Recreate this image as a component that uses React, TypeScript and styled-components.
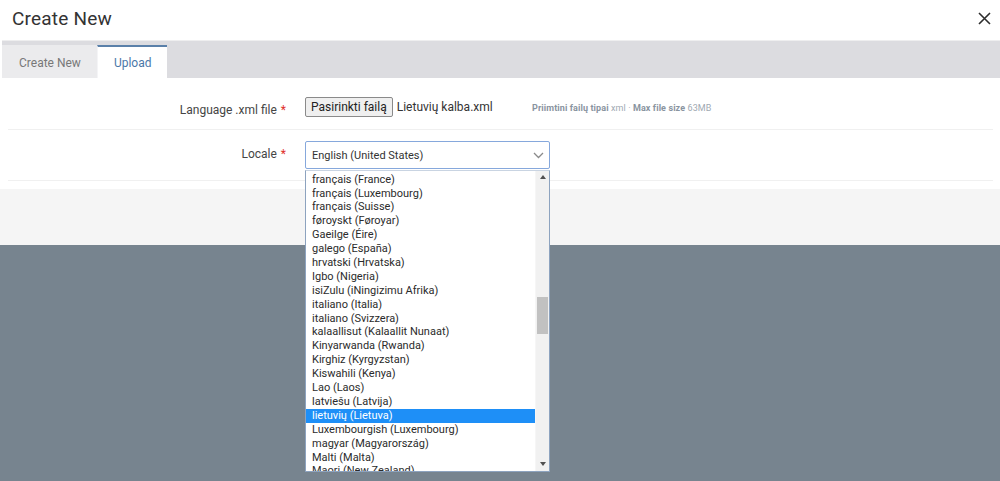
import React from "react";
import styled, { createGlobalStyle } from "styled-components";

const GlobalStyle = createGlobalStyle`
  html, body { margin: 0; padding: 0; }
  body {
    font-family: Roboto, "Liberation Sans", Arial, sans-serif;
    background: #77848f;
  }
  * { box-sizing: border-box; }
`;

const Page = styled.div`
  width: 1000px;
  height: 481px;
  background: #77848f;
  display: flex;
  flex-direction: column;
  overflow: hidden;
`;

const Modal = styled.div`
  background: #ffffff;
  display: flex;
  flex-direction: column;
`;

const Header = styled.div`
  height: 40px;
  display: flex;
  align-items: center;
  justify-content: space-between;
  padding: 0 9px 4px 12px;
`;

const Title = styled.h1`
  margin: 0;
  font-size: 19px;
  font-weight: 400;
  color: #333;
  letter-spacing: 0.2px;
`;

const CloseButton = styled.button`
  border: 0;
  background: transparent;
  padding: 0;
  width: 14px;
  height: 14px;
  display: flex;
  align-items: center;
  justify-content: center;
  cursor: pointer;
`;

const TabBar = styled.div`
  margin-left: 2px;
  height: 38px;
  background: #dcdce0;
  border-top: 1px solid #eeeeef;
  padding-top: 4px;
  display: flex;
  align-items: stretch;
`;

const Tab = styled.div<{ $active?: boolean }>`
  padding: 0 16px;
  display: flex;
  align-items: center;
  font-size: 12px;
  color: ${(p) => (p.$active ? "#4b78a8" : "#787878")};
  background: ${(p) => (p.$active ? "#ffffff" : "#ebebed")};
  border-top: 2px solid ${(p) => (p.$active ? "#5a80a9" : "#ebebed")};
  border-left: 1px solid ${(p) => (p.$active ? "#f4f4f6" : "transparent")};
`;

const Body = styled.div`
  padding: 0 7px 8px 8px;
`;

const FormRow = styled.div<{ $top: number; $bottom: number }>`
  display: grid;
  grid-template-columns: 289px 1fr;
  column-gap: 8px;
  align-items: center;
  padding-top: ${(p) => p.$top}px;
  padding-bottom: ${(p) => p.$bottom}px;
  border-bottom: 1px solid #f0f0f0;
`;

const Label = styled.label<{ $shift?: number }>`
  justify-self: end;
  padding-right: 11px;
  font-size: 12px;
  color: #454545;
  position: relative;
  top: ${(p) => p.$shift ?? 0}px;
`;

const Required = styled.span`
  color: #e0302a;
  margin-left: 4px;
`;

const Controls = styled.div`
  display: flex;
  align-items: center;
`;

const FileField = styled.div`
  width: 227px;
  display: flex;
  align-items: center;
  gap: 4px;
`;

const FileButton = styled.button`
  height: 20px;
  padding: 0 5px;
  font-family: Roboto, "Liberation Sans", Arial, sans-serif;
  font-size: 12px;
  color: #222;
  background: #efefef;
  border: 1px solid #8a8a8a;
  border-radius: 2px;
`;

const FileName = styled.span`
  font-size: 12px;
  color: #333;
`;

const Hint = styled.span`
  font-size: 9px;
  color: #a0a9b2;
  margin-top: 1px;
  letter-spacing: 0.1px;
`;

const HintStrong = styled.b`
  font-weight: 700;
  color: #8994a0;
`;

const SelectWrap = styled.div`
  position: relative;
  width: 245px;
`;

const SelectBox = styled.div`
  height: 28px;
  border: 1px solid #86a8dc;
  border-radius: 2px;
  display: flex;
  align-items: center;
  justify-content: space-between;
  padding: 0 5px 0 6px;
  font-size: 11px;
  color: #333;
  background: #fff;
`;

const Dropdown = styled.div`
  position: absolute;
  top: 100%;
  left: 0;
  width: 245px;
  height: 302px;
  margin-top: 1px;
  background: #fff;
  border: 1px solid #8da3bf;
  border-top-color: #c9d4e2;
  display: flex;
  z-index: 10;
`;

const Options = styled.div`
  flex: 1;
  overflow: hidden;
`;

const OptionList = styled.ul`
  list-style: none;
  margin: 1.7px 0 0 0;
  padding: 0;
`;

const Option = styled.li<{ $selected?: boolean }>`
  height: 13.9px;
  line-height: 13.9px;
  padding-left: 6px;
  font-size: 11px;
  white-space: nowrap;
  color: ${(p) => (p.$selected ? "#ffffff" : "#2b2b2b")};
  background: ${(p) => (p.$selected ? "#1e8ff7" : "transparent")};
`;

const ScrollTrack = styled.div`
  width: 14px;
  background: #f1f1f1;
  border-left: 1px solid #f6f6f6;
  display: flex;
  flex-direction: column;
  align-items: center;
  padding: 4px 0 5px;
`;

const ScrollArrow = styled.div<{ $down?: boolean }>`
  width: 0;
  height: 0;
  border-left: 3.5px solid transparent;
  border-right: 3.5px solid transparent;
  ${(p) =>
    p.$down
      ? "border-top: 4px solid #505050;"
      : "border-bottom: 4px solid #505050;"}
`;

const ScrollSpace = styled.div<{ $grow: number }>`
  flex: ${(p) => p.$grow};
`;

const ScrollThumb = styled.div`
  width: 11px;
  height: 37px;
  background: #c1c1c1;
`;

const Footer = styled.div`
  height: 56px;
  background: #f5f5f5;
`;

const options = [
  "français (France)",
  "français (Luxembourg)",
  "français (Suisse)",
  "føroyskt (Føroyar)",
  "Gaeilge (Éire)",
  "galego (España)",
  "hrvatski (Hrvatska)",
  "Igbo (Nigeria)",
  "isiZulu (iNingizimu Afrika)",
  "italiano (Italia)",
  "italiano (Svizzera)",
  "kalaallisut (Kalaallit Nunaat)",
  "Kinyarwanda (Rwanda)",
  "Kirghiz (Kyrgyzstan)",
  "Kiswahili (Kenya)",
  "Lao (Laos)",
  "latviešu (Latvija)",
  "lietuvių (Lietuva)",
  "Luxembourgish (Luxembourg)",
  "magyar (Magyarország)",
  "Malti (Malta)",
  "Maori (New Zealand)",
];

const CloseIcon = () => (
  <svg width="13" height="13" viewBox="0 0 13 13">
    <path d="M1 1 L12 12 M12 1 L1 12" stroke="#2d2d2d" strokeWidth="1.6" fill="none" />
  </svg>
);

const Chevron = () => (
  <svg width="11" height="7" viewBox="0 0 11 7">
    <path d="M1 1 L5.5 5.5 L10 1" stroke="#8a8a8a" strokeWidth="1.3" fill="none" />
  </svg>
);

export default function App() {
  return (
    <>
      <GlobalStyle />
      <Page>
        <Modal>
          <Header>
            <Title>Create New</Title>
            <CloseButton aria-label="Close">
              <CloseIcon />
            </CloseButton>
          </Header>
          <TabBar>
            <Tab>Create New</Tab>
            <Tab $active>Upload</Tab>
          </TabBar>
          <Body>
            <FormRow $top={19} $bottom={12}>
              <Label $shift={3}>
                Language .xml file<Required>*</Required>
              </Label>
              <Controls>
                <FileField>
                  <FileButton>Pasirinkti failą</FileButton>
                  <FileName>Lietuvių kalba.xml</FileName>
                </FileField>
                <Hint>
                  <HintStrong>Priimtini failų tipai</HintStrong> xml · <HintStrong>Max file size</HintStrong> 63MB
                </Hint>
              </Controls>
            </FormRow>
            <FormRow $top={11} $bottom={11}>
              <Label $shift={-1}>
                Locale<Required>*</Required>
              </Label>
              <Controls>
                <SelectWrap>
                  <SelectBox>
                    <span>English (United States)</span>
                    <Chevron />
                  </SelectBox>
                  <Dropdown>
                    <Options>
                      <OptionList>
                        {options.map((o) => (
                          <Option key={o} $selected={o === "lietuvių (Lietuva)"}>
                            {o}
                          </Option>
                        ))}
                      </OptionList>
                    </Options>
                    <ScrollTrack>
                      <ScrollArrow />
                      <ScrollSpace $grow={116} />
                      <ScrollThumb />
                      <ScrollSpace $grow={125} />
                      <ScrollArrow $down />
                    </ScrollTrack>
                  </Dropdown>
                </SelectWrap>
              </Controls>
            </FormRow>
          </Body>
          <Footer />
        </Modal>
      </Page>
    </>
  );
}
